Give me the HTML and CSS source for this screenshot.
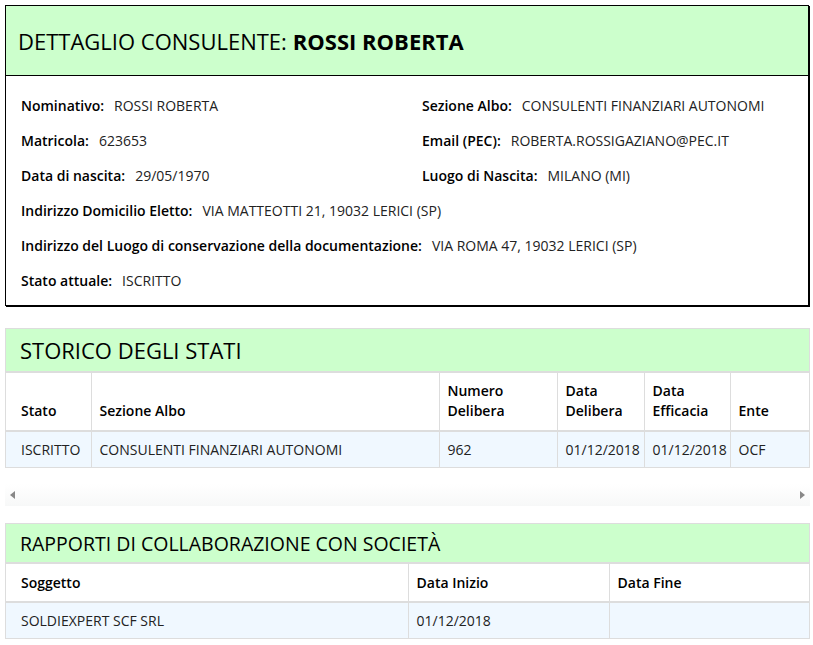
FILE: index.html
```html
<!DOCTYPE html>
<html lang="it">
<head>
<meta charset="utf-8">
<title>Dettaglio consulente</title>
<link rel="stylesheet" href="styles.css">
</head>
<body>
<div class="page">
  <section class="card detail">
    <h1 class="card-title">DETTAGLIO CONSULENTE: <strong>ROSSI ROBERTA</strong></h1>
    <div class="fields">
      <div class="field"><span class="lbl">Nominativo:</span><span class="val">ROSSI ROBERTA</span></div>
      <div class="field"><span class="lbl">Sezione Albo:</span><span class="val">CONSULENTI FINANZIARI AUTONOMI</span></div>
      <div class="field"><span class="lbl">Matricola:</span><span class="val">623653</span></div>
      <div class="field"><span class="lbl">Email (PEC):</span><span class="val">ROBERTA.ROSSIGAZIANO@PEC.IT</span></div>
      <div class="field"><span class="lbl">Data di nascita:</span><span class="val">29/05/1970</span></div>
      <div class="field"><span class="lbl">Luogo di Nascita:</span><span class="val">MILANO (MI)</span></div>
      <div class="field full"><span class="lbl">Indirizzo Domicilio Eletto:</span><span class="val">VIA MATTEOTTI 21, 19032 LERICI (SP)</span></div>
      <div class="field full"><span class="lbl">Indirizzo del Luogo di conservazione della documentazione:</span><span class="val">VIA ROMA 47, 19032 LERICI (SP)</span></div>
      <div class="field full"><span class="lbl">Stato attuale:</span><span class="val">ISCRITTO</span></div>
    </div>
  </section>

  <section class="panel">
    <h2 class="panel-title">STORICO DEGLI STATI</h2>
    <table class="grid stati">
      <colgroup>
        <col class="c-stato"><col class="c-sez"><col class="c-num"><col class="c-dd"><col class="c-de"><col class="c-ente">
      </colgroup>
      <thead>
        <tr><th>Stato</th><th>Sezione Albo</th><th>Numero Delibera</th><th>Data Delibera</th><th>Data Efficacia</th><th>Ente</th></tr>
      </thead>
      <tbody>
        <tr><td>ISCRITTO</td><td>CONSULENTI FINANZIARI AUTONOMI</td><td>962</td><td>01/12/2018</td><td>01/12/2018</td><td>OCF</td></tr>
      </tbody>
    </table>
  </section>
  <div class="hscroll"><span class="arr left"></span><span class="arr right"></span></div>

  <section class="panel">
    <h2 class="panel-title small">RAPPORTI DI COLLABORAZIONE CON SOCIETÀ</h2>
    <table class="grid rapporti">
      <colgroup>
        <col class="c-sogg"><col class="c-ini"><col class="c-fine">
      </colgroup>
      <thead>
        <tr><th>Soggetto</th><th>Data Inizio</th><th>Data Fine</th></tr>
      </thead>
      <tbody>
        <tr><td>SOLDIEXPERT SCF SRL</td><td>01/12/2018</td><td></td></tr>
      </tbody>
    </table>
  </section>
</div>
</body>
</html>
```
FILE: styles.css
```css
* { box-sizing: border-box; }
html, body { margin: 0; padding: 0; background: #fff; }
body {
  font-family: "Open Sans", sans-serif;
  color: #111;
  font-size: 14px;
}
.page {
  padding: 5px 3px 0 5px;
  width: 813px;
}
.card {
  border: 1px solid #000;
  box-shadow: 1px 1px 0 #000;
  width: 804px;
}
.card-title {
  margin: 0;
  background: #ccffcc;
  border-bottom: 1px solid #000;
  height: 70px;
  padding: 0 12px;
  display: flex;
  align-items: center;
  font-size: 22px;
  font-weight: 400;
  color: #000;
}
.card-title strong { font-weight: 700; margin-left: 6px; }
.fields {
  display: grid;
  grid-template-columns: 401px 1fr;
  grid-auto-rows: 35px;
  padding: 12px 15px 7px;
}
.field { display: flex; align-items: center; white-space: nowrap; }
.field.full { grid-column: 1 / -1; }
.lbl { font-weight: 600; color: #000; margin-right: 10px; }
.val { color: #222; }

.panel {
  margin-top: 22px;
  border: 1px solid #ddd;
  width: 805px;
}
.panel-title {
  margin: 0;
  background: #ccffcc;
  height: 44px;
  padding: 0 14px;
  display: flex;
  align-items: center;
  font-size: 22px;
  font-weight: 400;
  color: #000;
  border-bottom: 2px solid #ddd;
}
.panel-title.small { font-size: 19.5px; height: 40px; }
.grid {
  width: 100%;
  border-collapse: collapse;
  table-layout: fixed;
}
.grid th, .grid td {
  text-align: left;
  padding: 0 8px;
  border-left: 1px solid #ddd;
  line-height: 20px;
}
.grid th:first-child, .grid td:first-child { border-left: 0; padding-left: 15px; }
.grid th {
  font-weight: 600;
  color: #000;
  vertical-align: bottom;
  border-bottom: 2px solid #ddd;
}
.grid td { background: #f0f8ff; color: #222; height: 36px; }
.stati th { height: 58px; padding-bottom: 9px; }
.rapporti th { height: 38px; vertical-align: middle; }
.c-stato { width: 85px; }
.c-sez { width: 348px; }
.c-num { width: 118px; }
.c-dd { width: 87px; }
.c-de { width: 86px; }
.c-ente { width: 79px; }
.c-sogg { width: 402px; }
.c-ini { width: 201px; }
.c-fine { width: 200px; }

.hscroll {
  margin-top: 16px;
  height: 22px;
  width: 805px;
  background: linear-gradient(#fff, #f7f8f8);
  display: flex;
  justify-content: space-between;
  align-items: center;
  padding: 0 5px;
}
.hscroll + .panel { margin-top: 17px; }
.arr { width: 0; height: 0; border-top: 4px solid transparent; border-bottom: 4px solid transparent; }
.arr.left { border-right: 5px solid #888; }
.arr.right { border-left: 5px solid #888; }
```
